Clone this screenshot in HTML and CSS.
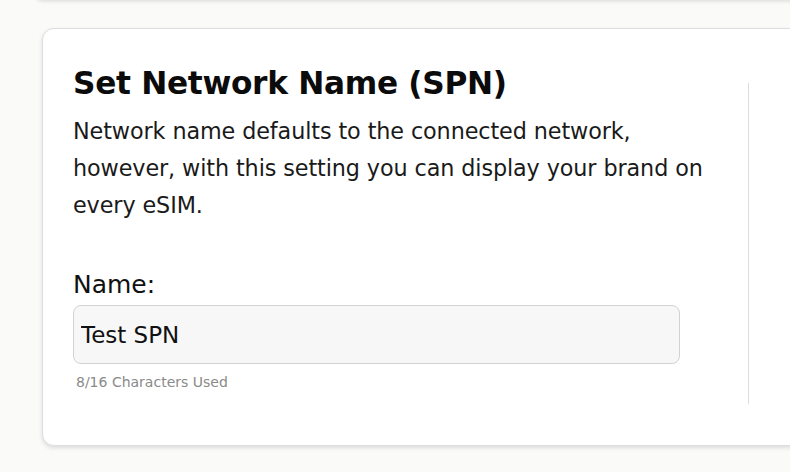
FILE: index.html
```html
<!DOCTYPE html>
<html>
<head>
<meta charset="utf-8">
<link rel="stylesheet" href="styles.css">
</head>
<body>
<div class="prev-card"></div>
<section class="card">
  <div class="content">
    <h1 class="title">Set Network Name (SPN)</h1>
    <p class="desc">Network name defaults to the connected network, however, with this setting you can display your brand on every eSIM.</p>
    <label class="label" for="spn">Name:</label>
    <input id="spn" class="input" type="text" value="Test SPN">
    <div class="help">8/16 Characters Used</div>
  </div>
  <div class="divider"></div>
</section>
</body>
</html>
```
FILE: styles.css
```css
html, body {
  margin: 0;
  padding: 0;
  background: #fafaf9;
  overflow: hidden;
  height: 472px;
  font-family: "DejaVu Sans", "Noto Sans", sans-serif;
  color: #111;
}
.prev-card {
  height: 20px;
  margin: -20px -40px 0 32px;
  background: #fff;
  border-radius: 0 0 12px 12px;
  box-shadow: 0 1px 4px rgba(0,0,0,0.14);
}
.card {
  display: flex;
  margin: 28px -60px 0 42px;
  height: 418px;
  box-sizing: border-box;
  background: #fff;
  border: 1px solid #dedede;
  border-radius: 12px;
  box-shadow: 0 2px 4px rgba(0,0,0,0.12);
  padding: 0 0 0 30px;
}
.content {
  width: 675px;
  box-sizing: border-box;
  padding-top: 34px;
}
.title {
  margin: 0;
  font-size: 31.2px;
  font-weight: 700;
  line-height: 40px;
  letter-spacing: -0.3px;
  color: #0b0b0b;
}
.desc {
  margin: 10px 0 0;
  width: 640px;
  font-size: 22.3px;
  line-height: 37px;
  font-weight: 400;
  letter-spacing: -0.1px;
  color: #1a1a1a;
}
.label {
  display: block;
  margin-top: 46px;
  font-size: 25px;
  line-height: 30px;
  color: #111;
}
.input {
  display: block;
  box-sizing: border-box;
  margin-top: 5px;
  width: 607px;
  height: 59px;
  padding: 0 7px;
  font-family: inherit;
  font-size: 23px;
  color: #111;
  background: #f7f7f7;
  border: 1px solid #d2d2d2;
  border-radius: 8px;
  outline: none;
}
.help {
  margin-top: 9px;
  margin-left: 3px;
  font-size: 14px;
  line-height: 18px;
  color: #8a8a8a;
}
.divider {
  width: 1px;
  margin: 54px 0 41px 0;
  background: #dcdcdc;
}
```
